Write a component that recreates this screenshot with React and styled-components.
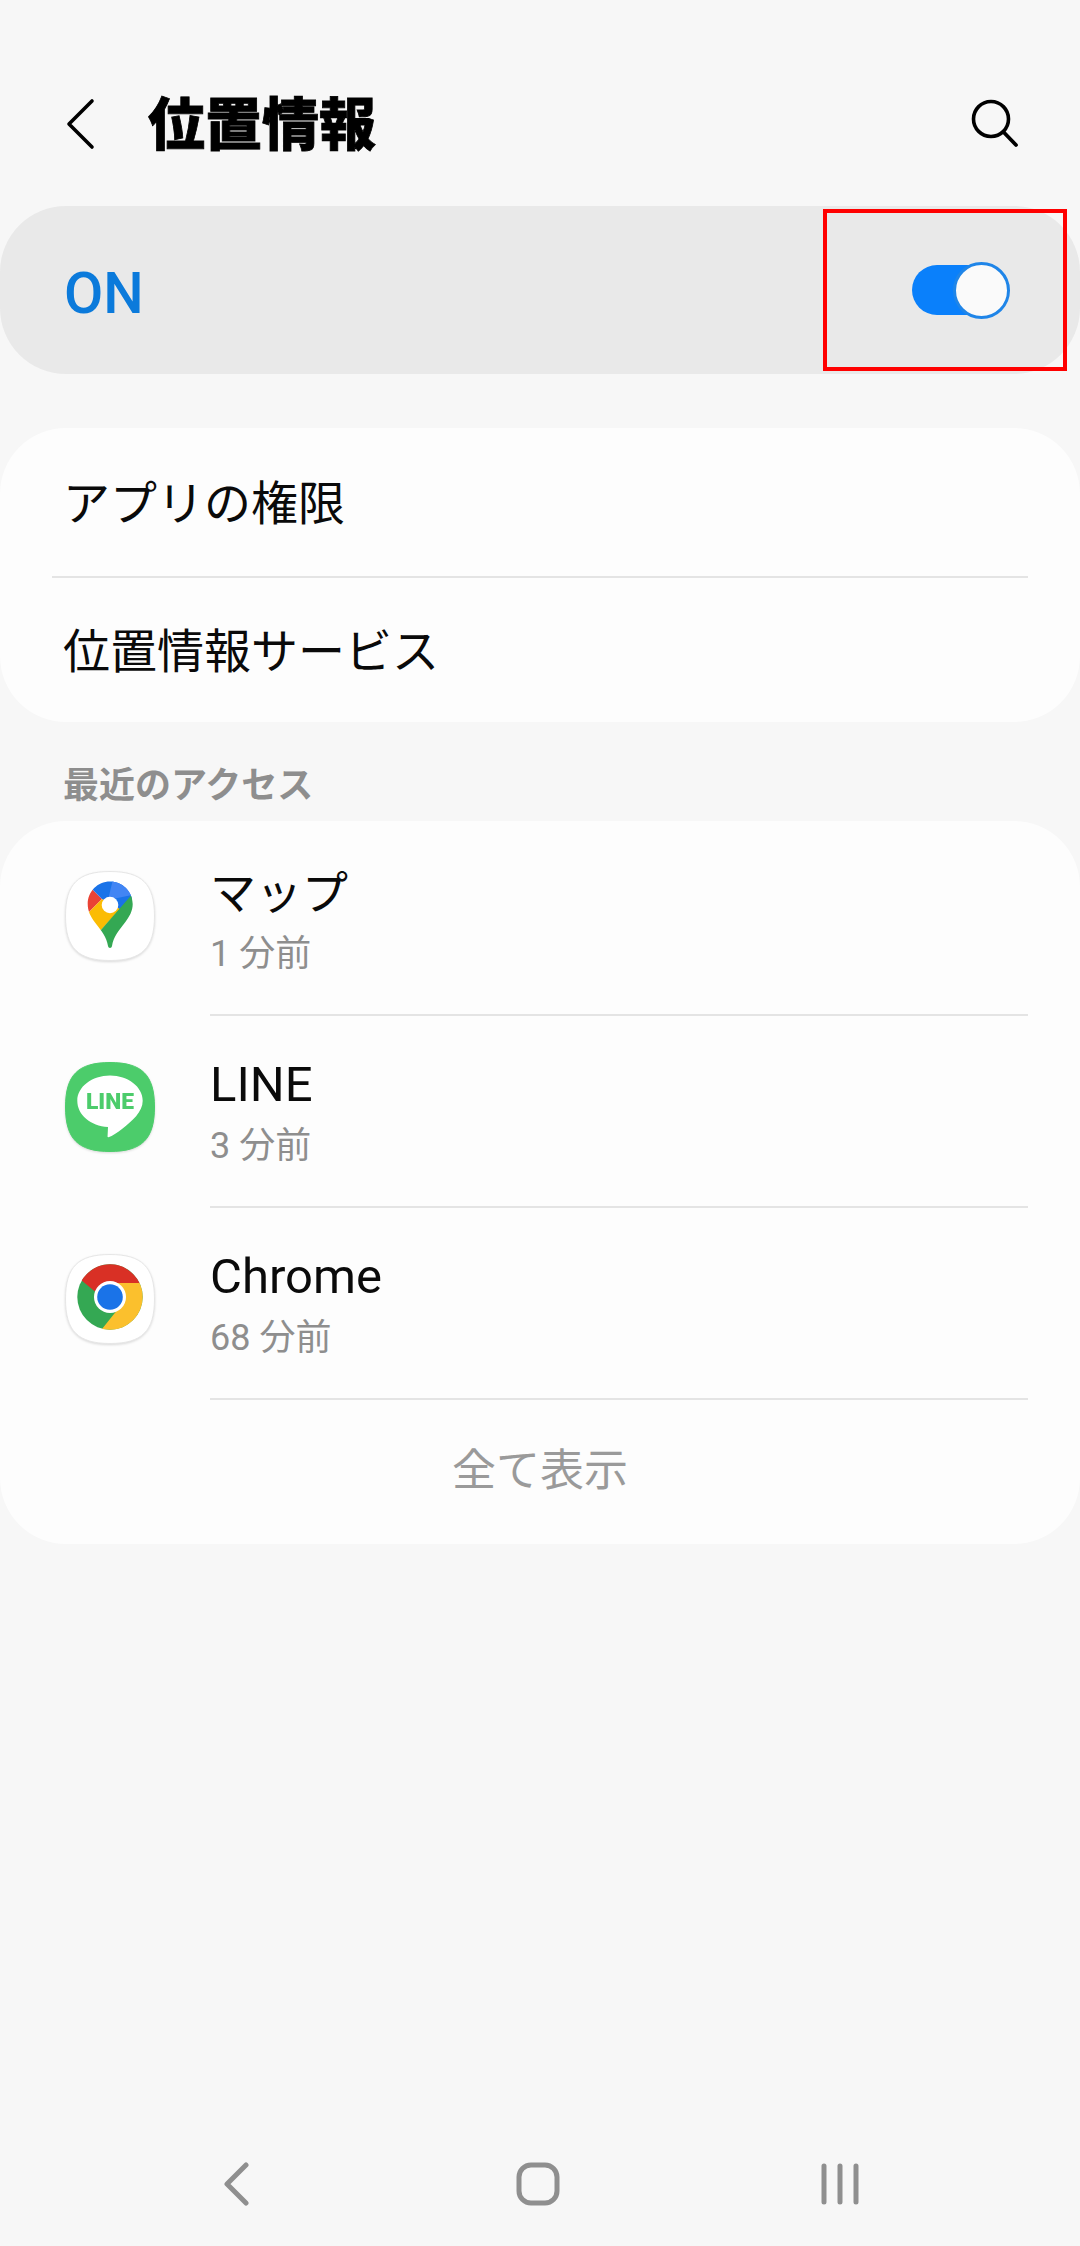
import React from 'react';
import styled, { createGlobalStyle } from 'styled-components';

const GlobalStyle = createGlobalStyle`
  html, body { margin: 0; padding: 0; background: #f7f7f7; }
  body { font-family: Roboto, "Noto Sans CJK JP", sans-serif; color: #0a0a0a; }
`;

const Page = styled.div`
  display: flex;
  flex-direction: column;
  width: 1080px;
  height: 2246px;
  overflow: hidden;
  background: #f7f7f7;
`;

const Header = styled.header`
  display: flex;
  align-items: center;
  height: 80px;
  margin-top: 84px;
  padding: 0 60px 0 66px;
`;

const Title = styled.h1`
  flex: 1;
  margin: 0 0 0 52px;
  padding-top: 3px;
  font-size: 57px;
  line-height: 77px;
  font-weight: 900;
  color: #000;
  -webkit-text-stroke: 0.8px #000;
`;

const MasterBar = styled.div`
  position: relative;
  display: flex;
  align-items: center;
  justify-content: space-between;
  height: 168px;
  margin-top: 42px;
  padding: 0 70px 0 64px;
  box-sizing: border-box;
  background: #e9e9e9;
  border-radius: 66px;
`;

const OnLabel = styled.span`
  font-size: 57px;
  font-weight: 500;
  color: #0b7adb;
  position: relative;
  top: 3px;
`;

const Toggle = styled.div`
  position: relative;
  display: flex;
  align-items: center;
  width: 98px;
  height: 57px;
`;

const ToggleTrack = styled.div`
  width: 80px;
  height: 50px;
  background: #0a80fb;
  border-radius: 25px;
`;

const ToggleThumb = styled.div`
  position: absolute;
  top: 0;
  right: 0;
  width: 57px;
  height: 57px;
  box-sizing: border-box;
  background: #fafafa;
  border: 3px solid #1f85e8;
  border-radius: 50%;
`;

const Highlight = styled.div`
  position: absolute;
  left: 823px;
  top: 3px;
  width: 244px;
  height: 162px;
  box-sizing: border-box;
  border: 4px solid #f00;
`;

const Card = styled.section`
  background: #fdfdfd;
  border-radius: 66px;
  margin-top: ${p => p.$top || 0}px;
  padding-top: ${p => p.$pad || 0}px;
`;

const MenuRow = styled.div`
  display: flex;
  align-items: center;
  height: ${p => p.$height}px;
  box-sizing: border-box;
  margin: 0 52px;
  padding: 0 12px 6px 11px;
  font-size: 47px;
  border-bottom: ${p => (p.$divider ? '2px solid #e4e4e4' : 'none')};
`;

const SectionTitle = styled.h2`
  margin: 44px 0 15px 63px;
  font-size: 36px;
  line-height: 40px;
  font-weight: 700;
  color: #8e8e8e;
`;

const AppRow = styled.div`
  display: flex;
  height: 192px;
  padding-left: 64px;
`;

const AppIcon = styled.svg`
  flex: none;
  width: 92px;
  height: 92px;
  margin-top: ${p => p.$top}px;
  margin-right: 54px;
  filter: drop-shadow(0 1px 1px rgba(0, 0, 0, 0.14));
`;

const AppBody = styled.div`
  flex: 1;
  margin-right: 52px;
  padding-top: 42px;
  box-sizing: border-box;
  border-bottom: 2px solid #e4e4e4;
`;

const AppName = styled.div`
  font-size: ${p => (p.$latin ? 49 : 46)}px;
  line-height: 54px;
`;

const AppTime = styled.div`
  margin-top: 13px;
  font-size: 36px;
  line-height: 42px;
  color: #8e8e8e;
`;

const ShowAll = styled.div`
  display: flex;
  align-items: center;
  justify-content: center;
  height: 144px;
  padding-bottom: 10px;
  box-sizing: border-box;
  font-size: 44px;
  color: #9a9a9a;
`;

const NavBar = styled.nav`
  display: grid;
  grid-template-columns: repeat(3, 302px);
  justify-content: center;
  align-items: center;
  height: 124px;
  margin-top: auto;
  padding-right: 4px;
`;

const NavIcon = styled.svg`
  justify-self: center;
  display: block;
`;

const Squircle = ({ fill = '#fff', stroke = '#e6e6e6' }) => (
  <path
    d="M46 1.5C78 1.5 90.5 14 90.5 46S78 90.5 46 90.5 1.5 78 1.5 46 14 1.5 46 1.5Z"
    fill={fill}
    stroke={stroke}
  />
);

const MapsIcon = () => (
  <AppIcon $top={46} viewBox="0 0 92 92">
    <defs>
      <clipPath id="pin">
        <path d="M46 11.5C58.5 11.5 68.7 21.6 68.7 34C68.7 41 65.5 46.5 61 52.5C54 61.5 49.5 67 48 76C47.6 78.6 44.4 78.6 44 76C42.5 67 38 61.5 31 52.5C26.5 46.5 23.7 41 23.7 34C23.7 21.6 33.5 11.5 46 11.5Z" />
      </clipPath>
    </defs>
    <Squircle />
    <g clipPath="url(#pin)">
      <polygon points="20,47 38,29 26,17 15,17" fill="#ea4335" />
      <polygon points="25,16 38,29 54,45 72,24 72,5 25,5" fill="#1a73e8" />
      <polygon points="44,30 72,24 72,5 50,5" fill="#4285f4" />
      <polygon points="20,47 38,29 56,39 36,61 20,82" fill="#fbbc04" />
      <polygon points="70,22 72,82 20,82 36,61" fill="#34a853" />
    </g>
    <circle cx="46" cy="35" r="8.3" fill="#fff" />
  </AppIcon>
);

const LineIcon = () => (
  <AppIcon $top={45} viewBox="0 0 92 92">
    <Squircle fill="#4ccc6b" stroke="#4ccc6b" />
    <path
      d="M46 14.5C64 14.5 78.7 25.8 78.7 39.7C78.7 51 68 60 58 68C53 71.6 48.5 75 44.5 76.3C43.6 76.5 43.4 75.6 43.6 74.6L44 66C26.6 65 13.3 53.8 13.3 39.7C13.3 25.8 28 14.5 46 14.5Z"
      fill="#fff"
    />
    <text
      x="46"
      y="48"
      textAnchor="middle"
      textLength="48"
      lengthAdjust="spacingAndGlyphs"
      fontFamily="Roboto, sans-serif"
      fontWeight="900"
      fontSize="22"
      fill="#4ccc6b"
    >
      LINE
    </text>
  </AppIcon>
);

const ChromeIcon = () => (
  <AppIcon $top={45} viewBox="0 0 92 92">
    <Squircle />
    <circle cx="46" cy="44" r="32.7" fill="#34a853" />
    <path d="M46 11.3A32.7 32.7 0 0 1 75.5 30H46C39 30 34 33.5 31.5 39L17.7 27.5C24 17.5 34.5 11.3 46 11.3Z" fill="#d93025" />
    <path d="M75.5 30A32.7 32.7 0 0 1 46 76.7L38 76L54 56C58 53 60 49 60 44C60 38 57 33 52 30Z" fill="#fbc02d" />
    <circle cx="46" cy="44" r="16" fill="#fff" />
    <circle cx="46" cy="44" r="12.8" fill="#1a73e8" />
  </AppIcon>
);

const recentApps = [
  { name: 'マップ', time: '1 分前', Icon: MapsIcon },
  { name: 'LINE', time: '3 分前', Icon: LineIcon, latin: true },
  { name: 'Chrome', time: '68 分前', Icon: ChromeIcon, latin: true },
];

const App = () => (
  <Page>
    <GlobalStyle />
    <Header>
      <svg width="30" height="52" viewBox="0 0 30 52" fill="none">
        <path d="M26 3 L3 26 L26 49" stroke="#000" strokeWidth="3.6" strokeLinecap="round" strokeLinejoin="round" />
      </svg>
      <Title>位置情報</Title>
      <svg width="50" height="50" viewBox="0 0 50 50" fill="none">
        <circle cx="21" cy="20" r="17.5" stroke="#000" strokeWidth="3.6" />
        <path d="M33.5 33 L46 46" stroke="#000" strokeWidth="3.8" strokeLinecap="round" />
      </svg>
    </Header>

    <MasterBar>
      <OnLabel>ON</OnLabel>
      <Toggle>
        <ToggleTrack />
        <ToggleThumb />
      </Toggle>
      <Highlight />
    </MasterBar>

    <Card $top={54}>
      <MenuRow $height={150} $divider>アプリの権限</MenuRow>
      <MenuRow $height={144}>位置情報サービス</MenuRow>
    </Card>

    <SectionTitle>最近のアクセス</SectionTitle>

    <Card $pad={3}>
      {recentApps.map(({ name, time, Icon, latin }) => (
        <AppRow key={name}>
          <Icon />
          <AppBody>
            <AppName $latin={latin}>{name}</AppName>
            <AppTime>{time}</AppTime>
          </AppBody>
        </AppRow>
      ))}
      <ShowAll>全て表示</ShowAll>
    </Card>

    <NavBar>
      <NavIcon width="26" height="44" viewBox="0 0 26 44" fill="none">
        <path d="M23 3 L4 22 L23 41" stroke="#8f8f8f" strokeWidth="5" strokeLinecap="round" strokeLinejoin="round" />
      </NavIcon>
      <NavIcon width="44" height="44" viewBox="0 0 44 44" fill="none">
        <rect x="3" y="3" width="38" height="38" rx="12" stroke="#8f8f8f" strokeWidth="5" />
      </NavIcon>
      <NavIcon width="38" height="42" viewBox="0 0 38 42" fill="none">
        <path d="M3 3 V39 M19 3 V39 M35 3 V39" stroke="#8f8f8f" strokeWidth="5" strokeLinecap="round" />
      </NavIcon>
    </NavBar>
  </Page>
);

export default App;
